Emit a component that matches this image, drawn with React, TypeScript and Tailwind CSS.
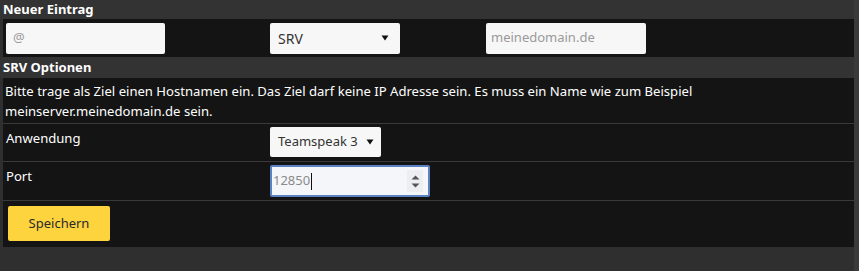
function Caret() {
  return (
    <svg width="8" height="6" viewBox="0 0 8 6" className="shrink-0">
      <path d="M0.5 0.5 L7.5 0.5 L4 5.5 Z" fill="#111" />
    </svg>
  );
}

function Spinner() {
  return (
    <div className="flex flex-col items-center justify-center gap-[3px] w-[16px] h-[22px] bg-[#eceef1]">
      <svg width="9" height="5" viewBox="0 0 9 5">
        <path d="M0.5 4.5 L8.5 4.5 L4.5 0.5 Z" fill="#555" />
      </svg>
      <svg width="9" height="5" viewBox="0 0 9 5">
        <path d="M0.5 0.5 L8.5 0.5 L4.5 4.5 Z" fill="#555" />
      </svg>
    </div>
  );
}

export default function App() {
  const font = { fontFamily: '"Noto Sans", "Open Sans", sans-serif' };

  return (
    <div className="w-[859px] h-[271px] bg-[#2f2f2f] flex text-white" style={font}>
      <div className="w-[854px] flex flex-col">
        {/* Neuer Eintrag */}
        <div className="h-[19px] bg-[#333333] px-[3px] text-[13px] font-bold leading-[19px]">
          Neuer Eintrag
        </div>
        <div className="ml-[3px] h-[38px] bg-[#141414] grid grid-cols-[264px_216px_1fr] items-center">
          <div className="px-[3px]">
            <div className="w-[159px] h-[31px] bg-[#f7f7f7] rounded-[2px] px-[7px] flex items-center text-[13px] text-[#9a9a9a]">
              @
            </div>
          </div>
          <div className="px-[3px]">
            <div className="w-[130px] h-[31px] bg-[#f7f7f7] rounded-[2px] pl-[8px] pr-[11px] flex items-center justify-between text-[14px] text-[#333]">
              <span>SRV</span>
              <Caret />
            </div>
          </div>
          <div className="px-[3px]">
            <div className="w-[160px] h-[31px] bg-[#f7f7f7] rounded-[2px] px-[5px] flex items-center text-[13px] text-[#9a9a9a]">
              meinedomain.de
            </div>
          </div>
        </div>

        {/* SRV Optionen */}
        <div className="h-[21px] bg-[#333333] px-[3px] text-[13px] font-bold leading-[21px]">
          SRV Optionen
        </div>
        <div className="ml-[3px] bg-[#141414] flex flex-col">
          <div className="h-[46px] px-[2px] pt-[3px] text-[13.1px] leading-[20px] border-b border-[#3a3a3a]">
            Bitte trage als Ziel einen Hostnamen ein. Das Ziel darf keine IP Adresse sein. Es muss ein Name wie zum Beispiel
            <br />
            meinserver.meinedomain.de sein.
          </div>
          <div className="h-[38px] grid grid-cols-[264px_1fr] border-b border-[#3a3a3a]">
            <div className="px-[3px] pt-[4px] text-[13.1px] leading-[20px]">Anwendung</div>
            <div className="px-[3px] pt-[3px]">
              <div className="w-[111px] h-[30px] bg-[#f7f7f7] rounded-[2px] pl-[8px] pr-[7px] flex items-center justify-between text-[13px] text-[#333]">
                <span>Teamspeak 3</span>
                <Caret />
              </div>
            </div>
          </div>
          <div className="h-[39px] grid grid-cols-[264px_1fr] border-b border-[#3a3a3a]">
            <div className="px-[3px] pt-[4px] text-[13.1px] leading-[20px]">Port</div>
            <div className="px-[3px] pt-[3px]">
              <div className="w-[160px] h-[32px] bg-[#f4f6fa] rounded-[2px] border-2 border-[#5b83c4] pl-[1px] pr-[5px] flex items-center justify-between text-[13px] text-[#8a8a8a]">
                <span className="flex items-center">
                  12850
                  <span className="inline-block w-px h-[17px] bg-[#111] ml-[1px]" />
                </span>
                <Spinner />
              </div>
            </div>
          </div>
          <div className="h-[46px] px-[5px] pt-[5px]">
            <button className="w-[102px] h-[35px] bg-[#fdd33e] rounded-[2px] text-[13px] text-[#2a2a2a]">
              Speichern
            </button>
          </div>
        </div>
      </div>
      <div className="w-[5px] bg-[#3a3a3a]" />
    </div>
  );
}
